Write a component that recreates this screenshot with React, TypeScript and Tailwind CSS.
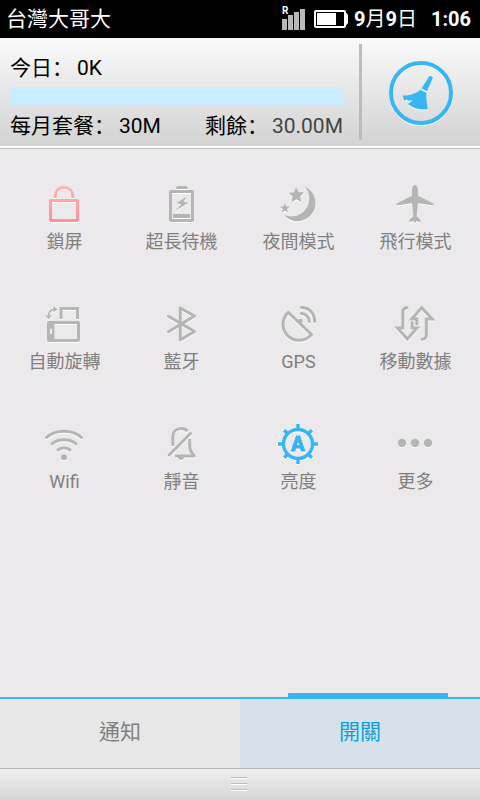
import { useId, useState } from "react";
import type { ReactNode } from "react";

const shapes: Record<string, ReactNode> = {
  lock: (
    <>
      <rect x="6.5" y="16.5" width="27" height="20" rx="0.5" />
      <path d="M11.3 14v-2.2a8.7 8.5 0 0 1 17.4 0V14" />
    </>
  ),
  battery: (
    <>
      <rect x="9.5" y="7.5" width="22" height="29" rx="0.5" />
      <path d="M15 5V3.5L16.5 2h8.5l1.5 1.5V5z" fill="currentColor" stroke="none" />
      <path d="M26 12.5 15.5 19l4.8 1.4-6 6.4L27.3 19l-4.8-1.2z" fill="currentColor" stroke="none" />
      <rect x="12" y="30" width="17" height="4" fill="currentColor" stroke="none" />
    </>
  ),
  night: (
    <g fill="currentColor" stroke="none">
      <path d="M27 2.7C33.5 5.6 37.5 12 37.5 19c0 10.2-8.3 18.3-18.5 18.3-5 0-9.3-2.3-12.3-6C14.5 34 23 32 28 25c5-7 4-16-1-22.3z" />
      <path d="m18 3.2 2.5 4.9 5.4.4-3.8 3.9 1.2 5.6-5-2.7-4.600 2.900.9-5.600-3.900-3.600 5.300-.8z" />
      <path d="m6.800 19.200 1.500 3.100 3.500.3-2.600 2.400.8 3.500-3.100-1.800-3 1.900.7-3.500-2.700-2.300 3.500-.4z" />
    </g>
  ),
  plane: (
    <path
      d="M20 1c1.800 0 3 2.400 3 5v5.800l14 7c1.200.7 1.700 1.700 1.600 2.700L23 19.300l-1.400 13 3.900 3.500v2.400l-4.200-1.200-.8 1.800h-1l-.8-1.800-4.200 1.200v-2.400l3.900-3.500-1.400-13-15.600 2.200c-.1-1 .4-2 1.600-2.700l14-7V6c0-2.600 1.200-5 3-5z"
      fill="currentColor"
      stroke="none"
    />
  ),
  rotate: (
    <>
      <path d="M17 15V4.500h16.500V15" />
      <rect x="4.500" y="18.500" width="30" height="18" rx="0.500" />
      <path d="M4 18h6.500v19H4zM7 24.500c-1.600 0-1.600 6 0 6s1.600-6 0-6z" fill="currentColor" fillRule="evenodd" stroke="none" />
      <path d="M4.500 12.500c0-4 2.300-6.700 5.700-7.200" strokeWidth="1.800" />
      <path d="m9.500 2 4 3.200-4 3.400zM1.200 11.500h6.600l-3.300 4z" fill="currentColor" stroke="none" />
    </>
  ),
  bluetooth: <path d="M7.500 12.300 33.500 27.500 19.200 36V4L33.500 12 7.500 27.700" strokeLinecap="round" strokeLinejoin="round" />,
  gps: (
    <>
      <path d="M10.300 8.300A16.100 16.100 0 1 0 33.500 30.500z" strokeLinejoin="round" />
      <circle cx="22.300" cy="17.200" r="2.400" fill="currentColor" stroke="none" />
      <path d="M23.500 9.500a8 8 0 0 1 7.700 8M23.500 3.500c8 0 13 6 13.200 14" strokeLinecap="round" />
    </>
  ),
  data: (
    <>
      <path d="M12 3.800c-2.800 0-4.200 1.400-4.200 4.200v16H2.500l9.800 11 9.800-11h-5v-5.500" strokeLinecap="round" />
      <path d="M27 35.200c2.800 0 4.300-1.400 4.300-4.200V15h5.800L26.700 3.800 16.800 15h5v5" strokeLinecap="round" />
    </>
  ),
  wifi: (
    <>
      <path d="M2.500 13.500c9-8.500 26-8.500 35 0M8 19.800c6.500-5.500 17.500-5.500 24 0M14 26c3.500-3 8.500-3 12 0" strokeLinecap="round" />
      <circle cx="20" cy="33.200" r="3" fill="currentColor" stroke="none" />
    </>
  ),
  silent: (
    <>
      <path d="M11.800 22v-9c0-5.500 3.200-8.500 8.200-8.500 3 0 5 .8 6.500 2.700" />
      <path d="M28.700 15v7c0 4 1.300 6.500 4.500 10H14" strokeLinejoin="round" />
      <path d="M8.200 31 29.500 9.500" strokeLinecap="round" />
      <path d="M16.500 33h7c-.5 2-2 3-3.500 3s-3-1-3.500-3z" fill="currentColor" stroke="none" />
    </>
  ),
  brightness: (
    <>
      <circle cx="20" cy="20" r="14.500" strokeWidth="3.400" />
      <path d="M20 0v5M20 35v5M0 20h5M35 20h5M6.200 6.200l3 3M30.800 30.800l3 3M6.200 33.800l3-3M30.800 9.200l3-3" strokeWidth="3.400" />
      <text x="20" y="27" fontSize="20" fontWeight="900" textAnchor="middle" fill="currentColor" strokeWidth="0.800">
        A
      </text>
    </>
  ),
  more: (
    <g fill="currentColor" stroke="none">
      <circle cx="7" cy="19" r="4.200" />
      <circle cx="20" cy="19" r="4.200" />
      <circle cx="33" cy="19" r="4.200" />
    </g>
  ),
};

const toggles = [
  { id: "lock", label: "鎖屏", color: "text-[#fb9da0]" },
  { id: "battery", label: "超長待機", color: "text-[#b5b5b5]" },
  { id: "night", label: "夜間模式", color: "text-[#b5b5b5]" },
  { id: "plane", label: "飛行模式", color: "text-[#b5b5b5]" },
  { id: "rotate", label: "自動旋轉", color: "text-[#b5b5b5]" },
  { id: "bluetooth", label: "藍牙", color: "text-[#b5b5b5]" },
  { id: "gps", label: "GPS", color: "text-[#b5b5b5]" },
  { id: "data", label: "移動數據", color: "text-[#b5b5b5]" },
  { id: "wifi", label: "Wifi", color: "text-[#b5b5b5]" },
  { id: "silent", label: "靜音", color: "text-[#b5b5b5]" },
  { id: "brightness", label: "亮度", color: "text-[#37b6f6]" },
  { id: "more", label: "更多", color: "text-[#b5b5b5]" },
];

const tabs = [
  { id: "notifications", label: "通知" },
  { id: "switches", label: "開關" },
];

function StatusBar() {
  return (
    <div className="flex h-[38px] items-center bg-black pr-[9px] pl-1.5 text-xl leading-7 text-white">
      <span className="flex-1 text-[21px]">台灣大哥大</span>
      <svg viewBox="0 0 24 26" className="mr-2 h-[26px] w-6" aria-hidden="true">
        <g fill="#b9b9b9">
          <path d="M0 13h5v11H0zM6 9h5v15H6zM12 6h5v18h-5zM18 3h5v21h-5z" />
        </g>
        <text x="0" y="8" fontSize="10" fontWeight="700" fill="#fff">
          R
        </text>
      </svg>
      <svg viewBox="0 0 34 18" className="mr-1.5 h-[18px] w-[34px]" aria-hidden="true">
        <rect x="1" y="1" width="30" height="16" rx="1" fill="none" stroke="#fff" strokeWidth="2" />
        <path d="M31 3h1.500L34 5v8l-1.500 2H31z" fill="#fff" />
        <rect x="3" y="3" width="19" height="12" fill="#fff" />
      </svg>
      <span className="mr-3.5 font-bold">
        9<span className="font-normal">月</span>9<span className="font-normal">日</span>
      </span>
      <span className="font-bold">1:06</span>
    </div>
  );
}

function Usage({ label, value, dim }: { label: string; value: string; dim?: boolean }) {
  return (
    <p className="text-[21px] leading-7 text-black">
      {label}
      <span lang="zh-Hans" className="mr-1 font-['Noto_Sans_CJK_SC',sans-serif] leading-none">
        ：
      </span>
      <span className={dim ? "text-[#444]" : ""}>{value}</span>
    </p>
  );
}

function DataHeader() {
  return (
    <header className="flex border-b border-[#bdbdbd] bg-linear-to-b from-[#fafafa] to-[#d2d2d2] shadow-[inset_0_-2px_0_#fff]">
      <div className="flex-1 pt-4 pr-4 pb-2 pl-2.5">
        <Usage label="今日" value="0K" />
        <div
          role="progressbar"
          aria-label="每月套餐"
          aria-valuenow={0}
          aria-valuemax={30}
          className="mt-[5px] mb-[7px] h-[18px] bg-[#c9edff]"
        />
        <div className="flex justify-between">
          <Usage label="每月套餐" value="30M" />
          <Usage label="剩餘" value="30.00M" dim />
        </div>
      </div>
      <div className="mt-1.5 mb-2 w-[3px] bg-[#bcbcbc]" />
      <div className="flex w-[118px] items-center justify-center">
        <button type="button" aria-label="清理" className="mr-px text-[#37b6f6]">
          <svg viewBox="0 0 64 64" className="size-16 drop-shadow-[0_1px_0_#fff]">
            <circle cx="32" cy="32" r="30" fill="none" stroke="currentColor" strokeWidth="4" />
            <path
              d="M40.200 15.200c.5-1 4 .6 3.600 1.700L38 30.300 32.500 27.500zM31.200 28.800l6.300 3.200c-.4 5 .2 10.500 1.500 16.300-7.500 1-14.500-.5-20.200-5.300 1.800-.8 3.500-2.300 4.700-4.300-2.700 1.300-3.800 1.500-5.800-.2-1 .7-1.600.9-2.700 1l-1.300-5c7 .2 13-1.500 17.500-5.700z"
              fill="currentColor"
            />
          </svg>
        </button>
      </div>
    </header>
  );
}

function ToggleIcon({ id }: { id: string }) {
  const gradientId = useId();
  const isLock = id === "lock";
  return (
    <svg
      viewBox="0 0 40 40"
      className="size-10 overflow-visible drop-shadow-[0_1px_0_#fff]"
      fill="none"
      stroke={isLock ? `url(#${gradientId})` : "currentColor"}
      strokeWidth="3"
      aria-hidden="true"
    >
      {isLock && (
        <linearGradient id={gradientId} gradientUnits="userSpaceOnUse" x1="0" y1="0" x2="0" y2="38">
          <stop offset="0" stopColor="#ffb4b4" />
          <stop offset="1" stopColor="#ff9094" />
        </linearGradient>
      )}
      {shapes[id]}
    </svg>
  );
}

export default function App() {
  const [activeTab, setActiveTab] = useState("switches");

  return (
    <div
      lang="zh-Hant"
      className="flex min-h-screen flex-col bg-[#ece9ec] font-[Roboto,'Noto_Sans_CJK_TC',sans-serif]"
    >
      <StatusBar />
      <DataHeader />

      {/* Quick toggles */}
      <main className="grid flex-1 grid-cols-4 content-start gap-y-[50px] px-1.5 pt-[35px]">
        {toggles.map((toggle) => (
          <button
            key={toggle.id}
            type="button"
            className="flex flex-col items-center gap-1.5 text-lg leading-6 text-[#808080]"
          >
            <span className={`pr-px ${toggle.color}`}>
              <ToggleIcon id={toggle.id} />
            </span>
            {toggle.label}
          </button>
        ))}
      </main>

      {/* Tabs */}
      <div className={`h-1 w-1/3 bg-[#37b6f6] ${activeTab === "switches" ? "ml-[60%]" : "ml-[10%]"}`} />
      <nav className="grid grid-cols-2 border-t-2 border-[#37b6f6]">
        {tabs.map((tab) => (
          <button
            key={tab.id}
            type="button"
            onClick={() => setActiveTab(tab.id)}
            className={`h-[69px] pb-1 text-[21px] leading-7 ${
              activeTab === tab.id ? "bg-[#d5e2e9] text-[#0c9fe6]" : "bg-[#e7e7e7] text-[#808080]"
            }`}
          >
            {tab.label}
          </button>
        ))}
      </nav>

      {/* Drag handle */}
      <div className="flex h-8 flex-col items-center justify-center gap-1 border-t border-[#b5b5b5] bg-linear-to-b from-[#efefef] to-[#d6d6d6] pr-0.5 pb-0.5">
        <div className="h-0.5 w-4 border-b border-white bg-[#bdbdbd]" />
        <div className="h-0.5 w-4 border-b border-white bg-[#bdbdbd]" />
        <div className="h-0.5 w-4 border-b border-white bg-[#bdbdbd]" />
      </div>
    </div>
  );
}
